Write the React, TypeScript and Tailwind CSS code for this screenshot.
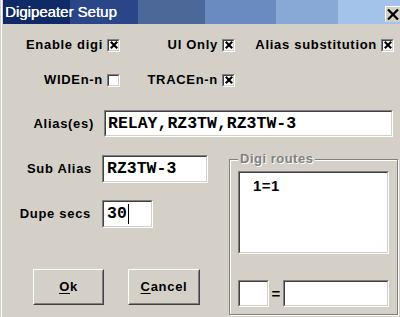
import React from 'react';

const label = "text-[13px] font-bold tracking-[0.7px] text-black leading-[16px] whitespace-nowrap";

function CheckBox({ checked }: { checked: boolean }) {
  return (
    <span className="w-[13px] h-[13px] shrink-0 border border-t-[#808080] border-l-[#808080] border-b-white border-r-white bg-white flex">
      <span className="flex-1 border border-t-[#404040] border-l-[#404040] border-b-[#d4d0c8] border-r-[#d4d0c8] flex items-center justify-center">
        {checked && (
          <svg width="8" height="8" viewBox="0 0 8 8">
            <path d="M0.8 0.8L7.2 7.2M7.2 0.8L0.8 7.2" stroke="#000" strokeWidth="2.2" />
          </svg>
        )}
      </span>
    </span>
  );
}

function Option({ text, checked, width }: { text: string; checked: boolean; width: string }) {
  return (
    <div className={`${width} flex items-center justify-end gap-[4px]`}>
      <span className={label}>{text}</span>
      <CheckBox checked={checked} />
    </div>
  );
}

function Sunken({ className, children }: { className: string; children?: React.ReactNode }) {
  return (
    <div className={`${className} border border-t-[#808080] border-l-[#808080] border-b-white border-r-white flex`}>
      <div className="flex-1 bg-white border border-t-[#404040] border-l-[#404040] border-b-[#d4d0c8] border-r-[#d4d0c8] font-['Liberation_Mono',monospace] font-bold text-[16.5px] text-black leading-[22px] overflow-hidden">
        {children}
      </div>
    </div>
  );
}

function WinButton({ first, rest, width }: { first: string; rest: string; width: string }) {
  return (
    <button className={`${width} h-[36px] border border-t-white border-l-white border-b-[#404040] border-r-[#404040] bg-[#d4d0c8] flex`}>
      <span className="flex-1 border border-t-[#d4d0c8] border-l-[#d4d0c8] border-b-[#808080] border-r-[#808080] flex items-center justify-center">
        <span className={label}>
          <span className="underline underline-offset-2">{first}</span>
          {rest}
        </span>
      </span>
    </button>
  );
}

export default function App() {
  return (
    <div className="w-[400px] h-[317px] overflow-hidden bg-[#d4d0c8] pl-[1px] font-['Liberation_Sans',Arial,sans-serif]">
      <div className="h-full border-l border-white pl-[1px] flex flex-col">
        {/* title bar */}
        <div className="h-[24px] shrink-0 flex items-center bg-[linear-gradient(90deg,#102a68_0_67px,#2a4689_67px_135px,#4b6898_135px_202px,#6a8bbf_202px_273px,#88a8d6_273px_335px,#a4c3eb_335px)]">
          <span className="pl-[2px] text-white text-[15px] leading-[18px] whitespace-nowrap [text-shadow:0.3px_0_0_#fff]">Digipeater Setup</span>
          <div className="ml-auto self-start mt-[6px] w-[15px] h-[16px] border-t border-l border-t-white border-l-white bg-[#d4d0c8] flex items-center justify-end pr-[1px]">
            <svg width="12" height="11" viewBox="0 0 12 11">
              <path d="M1 0.5L11 10.5M11 0.5L1 10.5" stroke="#000" strokeWidth="2.2" />
            </svg>
          </div>
        </div>

        {/* checkboxes */}
        <div className="flex mt-[13px] h-[16px]">
          <Option text="Enable digi" checked width="w-[117px]" />
          <Option text="UI Only" checked width="w-[115px]" />
          <Option text="Alias substitution" checked width="w-[159px]" />
        </div>
        <div className="flex mt-[19px] h-[16px]">
          <Option text="WIDEn-n" checked={false} width="w-[117px]" />
          <Option text="TRACEn-n" checked width="w-[115px]" />
        </div>

        {/* alias */}
        <div className="flex items-center mt-[22px] gap-[10px]">
          <span className={`${label} w-[91px] text-right`}>Alias(es)</span>
          <Sunken className="w-[289px] h-[27px]">
            <div className="pl-[2px] pt-[1px]">RELAY,RZ3TW,RZ3TW-3</div>
          </Sunken>
        </div>

        <div className="flex mt-[15px]">
          {/* left column */}
          <div className="w-[226px] pt-[3px] flex flex-col">
            <div className="flex items-center gap-[10px]">
              <span className={`${label} w-[89px] text-right`}>Sub Alias</span>
              <Sunken className="w-[106px] h-[28px]">
                <div className="pl-[3px] pt-[1px]">RZ3TW-3</div>
              </Sunken>
            </div>
            <div className="flex items-center gap-[11px] mt-[17px]">
              <span className={`${label} w-[88px] text-right`}>Dupe secs</span>
              <Sunken className="w-[51px] h-[28px]">
                <div className="pl-[3px] pt-[1px] flex items-center">
                  30<span className="ml-[1px] h-[20px] border-l border-black" />
                </div>
              </Sunken>
            </div>
            <div className="flex mt-[41px] pl-[30px] gap-[24px]">
              <WinButton first="O" rest="k" width="w-[71px]" />
              <WinButton first="C" rest="ancel" width="w-[72px]" />
            </div>
          </div>

          {/* digi routes */}
          <fieldset className="w-[169px] h-[163px] border border-[#808080] shadow-[inset_1px_1px_0_#fff,1px_1px_0_#fff]">
            <legend className="ml-[8px] px-[2px] bg-[#d4d0c8] text-[13px] font-bold tracking-[0.5px] leading-[14px] text-[#808080] [text-shadow:1px_1px_0_#fff]">
              Digi routes
            </legend>
            <Sunken className="ml-[8px] mt-[5px] w-[151px] h-[83px]">
              <div className="pl-[13px] pt-[2px] font-['Liberation_Sans',Arial,sans-serif] text-[15px] tracking-[0.5px]">1=1</div>
            </Sunken>
            <div className="flex items-center ml-[8px] mt-[26px]">
              <Sunken className="w-[31px] h-[27px]" />
              <span className="w-[14px] text-center text-[15px] font-bold leading-[16px]">=</span>
              <Sunken className="w-[106px] h-[27px]" />
            </div>
          </fieldset>
        </div>
      </div>
    </div>
  );
}
